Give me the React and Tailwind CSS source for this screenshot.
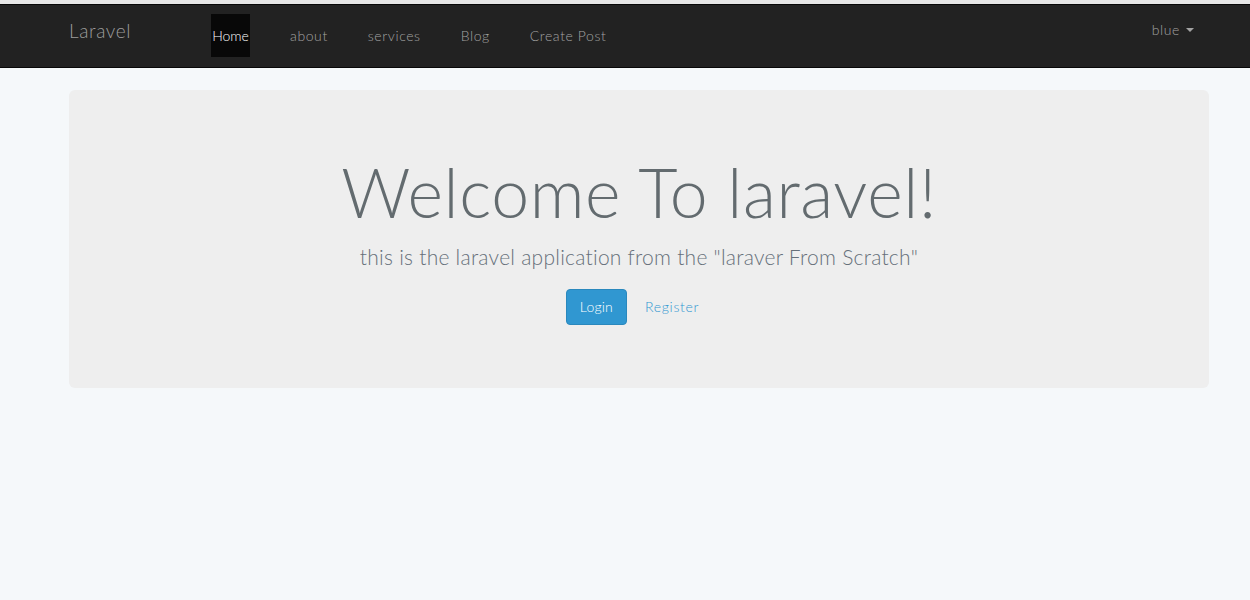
import React from 'react';

const links = ['about', 'services', 'Blog', 'Create Post'];

export default function App() {
    return (
        <div className="min-h-[600px] bg-[#f5f8fa] font-['Lato',_sans-serif] font-light text-[14px] text-[#636b6f]">
            <div className="h-[4px] bg-[#e7e7e7]"></div>
            {/* Navbar */}
            <nav className="h-[64px] bg-[#222222] border-t border-b border-[#080808] flex items-start tracking-[0.6px]">
                <div className="w-[69px]"></div>
                <a className="text-[19px] tracking-[0.6px] text-[#9d9d9d] mt-[12px] w-[142px]">Laravel</a>
                <div className="flex items-start gap-[40px] mt-[9px]">
                    <a className="bg-[#080808] text-white h-[43px] w-[39px] flex items-center justify-center tracking-normal">Home</a>
                    {links.map((l) => (
                        <a key={l} className="text-[#a3a3a3] h-[43px] flex items-center">{l}</a>
                    ))}
                </div>
                <div className="flex-1"></div>
                <a className="text-[#a3a3a3] mt-[14px] mr-[56px] flex items-center gap-[6px]">
                    blue
                    <span className="w-0 h-0 border-l-[4px] border-r-[4px] border-t-[4px] border-l-transparent border-r-transparent border-t-[#a3a3a3]"></span>
                </a>
            </nav>

            {/* Jumbotron */}
            <div className="pt-[22px] px-[69px] pr-[41px]">
                <div className="bg-[#eeeeee] rounded-[6px] h-[298px] flex flex-col items-center pt-[62px]">
                    <h1 className="text-[68px] leading-[80px] tracking-[0.6px] text-[#636b6f] font-light">Welcome To laravel!</h1>
                    <p className="text-[21px] tracking-[0.25px] mt-[9px] text-[#66707a]">this is the laravel application from the "laraver From Scratch"</p>
                    <div className="flex items-center gap-[18px] mt-[16px] pr-[13px]">
                        <button className="bg-[#3097d1] border border-[#2a88bd] text-white rounded-[4px] h-[36px] px-[13px] tracking-[0.2px]">Login</button>
                        <a className="text-[#3097d1] tracking-[0.7px]">Register</a>
                    </div>
                </div>
            </div>
        </div>
    );
}
